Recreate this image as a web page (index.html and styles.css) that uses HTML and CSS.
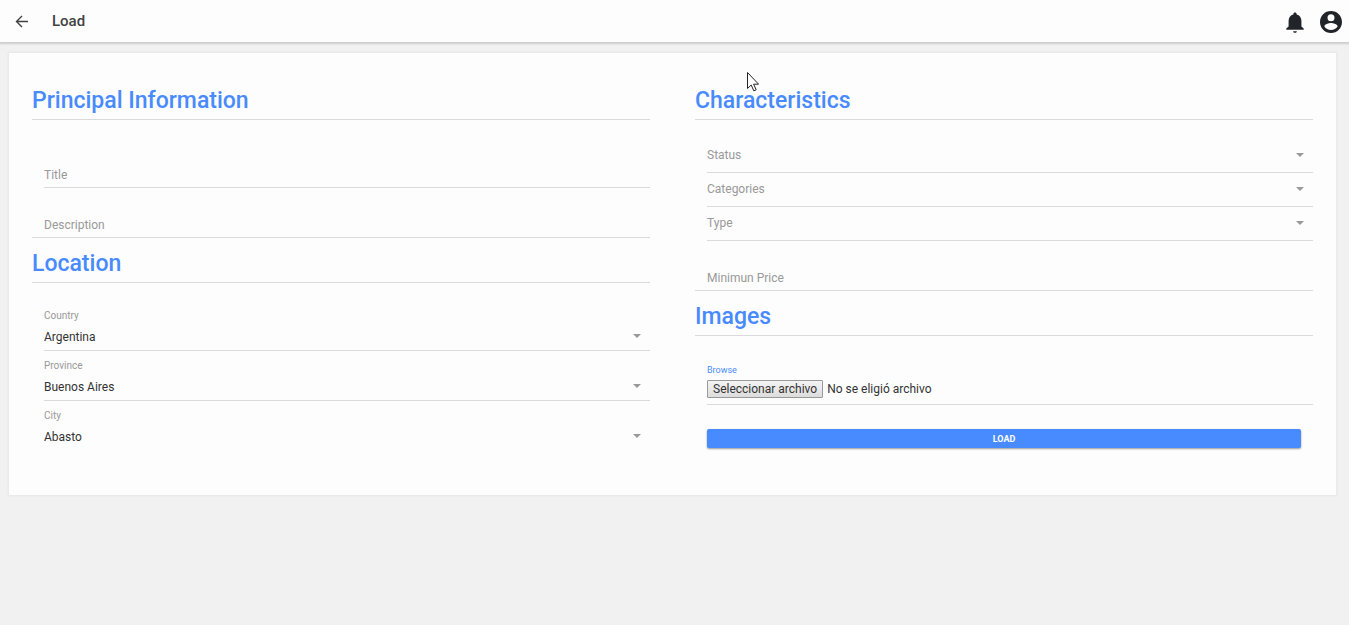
FILE: index.html
```
<!DOCTYPE html>
<html lang="en">
<head>
  <meta charset="utf-8">
  <meta name="viewport" content="width=device-width, initial-scale=1">
  <title>Load</title>
  <link rel="stylesheet" href="styles.css">
</head>
<body>
  <header class="toolbar">
    <button class="icon-button" type="button" aria-label="Back">
      <svg class="icon-back" viewBox="0 0 16 16"><path d="M14 8.500H2.500M8 3 2.500 8.500 8 14"/></svg>
    </button>
    <h1 class="toolbar-title">Load</h1>
    <div class="toolbar-actions">
      <button class="icon-button" type="button" aria-label="Notifications">
        <svg class="icon-action" viewBox="0 0 24 24"><path d="M12 23.800c1.100 0 2-.8 2-1.800h-4c0 1 .9 1.800 2 1.800zM19 17v-6c0-3.500-1.900-6.300-5.200-7.100V3.200C13.800 2.200 13 1.500 12 1.500s-1.800.7-1.800 1.700v.7C6.900 4.700 5 7.500 5 11v6l-2.500 2.200v1.300h19v-1.300z"/></svg>
      </button>
      <button class="icon-button" type="button" aria-label="Account">
        <svg class="icon-action" viewBox="1 1 22 22"><path d="M12 1C5.900 1 1 5.900 1 12s4.900 11 11 11 11-4.900 11-11S18.100 1 12 1zm0 3.300a3.500 3.500 0 1 1 0 7 3.500 3.500 0 0 1 0-7zM12 20c-2.800 0-5.200-1.400-6.600-3.500.1-2.200 4.400-3.400 6.600-3.400s6.500 1.200 6.600 3.400C17.200 18.600 14.800 20 12 20z"/></svg>
      </button>
    </div>
  </header>

  <main>
    <form class="card">
      <div class="column">
        <h2 class="section-title">Principal Information</h2>
        <div class="group">
          <div class="field text-field"><input type="text" placeholder="Title" aria-label="Title"></div>
          <div class="field text-field field-last"><input type="text" placeholder="Description" aria-label="Description"></div>
        </div>
        <h2 class="section-title">Location</h2>
        <div class="group">
          <div class="field stacked">
            <label for="country">Country</label>
            <div class="select-wrap"><select id="country"><option>Argentina</option></select></div>
          </div>
          <div class="field stacked">
            <label for="province">Province</label>
            <div class="select-wrap"><select id="province"><option>Buenos Aires</option></select></div>
          </div>
          <div class="field stacked no-line">
            <label for="city">City</label>
            <div class="select-wrap"><select id="city"><option>Abasto</option></select></div>
          </div>
        </div>
      </div>

      <div class="column">
        <h2 class="section-title">Characteristics</h2>
        <div class="group group-wide">
          <div class="field select-wrap compact"><select class="unset" aria-label="Status"><option>Status</option></select></div>
          <div class="field select-wrap compact"><select class="unset" aria-label="Categories"><option>Categories</option></select></div>
          <div class="field select-wrap compact"><select class="unset" aria-label="Type"><option>Type</option></select></div>
          <div class="field text-field field-last"><input type="text" placeholder="Minimun Price" aria-label="Minimun Price"></div>
        </div>
        <h2 class="section-title">Images</h2>
        <div class="group group-wide">
          <div class="field stacked">
            <label class="active" for="image">Browse</label>
            <div class="file-row">
              <input class="file-input" id="image" type="file">
              <span class="file-button">Seleccionar archivo</span>
              <span>No se eligió archivo</span>
            </div>
          </div>
          <button class="submit" type="button">LOAD</button>
        </div>
      </div>
    </form>
  </main>

  <svg class="pointer" viewBox="0 0 12 20" aria-hidden="true"><path d="M.5.5v16l3.700-3.500 2.600 5.800 2.400-1-2.600-5.600h5z"/></svg>
</body>
</html>
```
FILE: styles.css
```
* {
  box-sizing: border-box;
}

body {
  margin: 0;
  min-height: 100vh;
  background: #f1f1f1;
  color: #333;
  font: 12px/16px Roboto, "Liberation Sans", sans-serif;
}

button,
input,
select {
  margin: 0;
  padding: 0;
  border: 0;
  background: none;
  color: inherit;
  font: inherit;
}

.toolbar {
  display: flex;
  align-items: center;
  height: 42px;
  padding: 0 7px 0 14px;
  background: #fdfdfd;
  box-shadow: 0 1px 2px 1px #ccc;
}

.toolbar-title {
  margin: 0 0 0 22px;
  color: #424242;
  font-size: 15px;
  font-weight: 500;
}

.toolbar-actions {
  display: flex;
  gap: 14px;
  margin-left: auto;
  padding-top: 2px;
}

.icon-button {
  display: flex;
}

.icon-back {
  width: 16px;
  height: 16px;
  fill: none;
  stroke: #424242;
  stroke-width: 1.4;
}

.icon-action {
  width: 22px;
  height: 22px;
  fill: #212529;
}

.card {
  display: grid;
  grid-template-columns: 1fr 1fr;
  gap: 45px;
  margin: 11px 13px 0 9px;
  padding: 22px 23px 44px;
  background: #fdfdfd;
  box-shadow: 0 0 2px 1px #e6e6e6;
}

.section-title {
  margin: 0;
  padding: 12px 0 4px;
  border-bottom: 1px solid #dadada;
  color: #488aff;
  font-size: 23px;
  font-weight: 500;
  line-height: 28px;
}

.group {
  padding: 18px 0 0 12px;
}

.group-wide {
  padding-top: 19px;
}

.field {
  border-bottom: 1px solid #dadada;
}

.no-line {
  border-color: transparent;
}

.text-field {
  padding: 29px 0 4px;
}

.text-field input {
  display: block;
  width: 100%;
  height: 16px;
  outline: 0;
}

.text-field input::placeholder {
  color: #999;
  opacity: 1;
}

.field-last {
  margin-left: -12px;
  padding-left: 12px;
}

.stacked {
  padding-top: 8px;
}

.stacked label {
  display: block;
  margin-bottom: 1px;
  color: #999;
  font-size: 10px;
  line-height: 14px;
}

.stacked .active {
  color: #488aff;
  font-size: 9px;
}

.select-wrap {
  position: relative;
}

.select-wrap::after {
  content: "";
  position: absolute;
  top: 50%;
  right: 9px;
  margin-top: -3px;
  border: 4px solid transparent;
  border-top-color: #999;
  border-bottom: 0;
  pointer-events: none;
}

.select-wrap select {
  display: block;
  width: 100%;
  height: 26px;
  appearance: none;
}

.select-wrap.compact select {
  height: 33px;
  padding-bottom: 2px;
}

.select-wrap .unset {
  color: #999;
}

.file-row {
  position: relative;
  display: flex;
  align-items: center;
  gap: 4px;
  height: 26px;
  padding-bottom: 4px;
}

.file-input {
  position: absolute;
  inset: 0;
  width: 100%;
  opacity: 0;
}

.file-button {
  padding: 0 5px;
  border: 1px solid #999;
  border-radius: 1px;
  background: linear-gradient(#f4f4f4, #dcdcdc);
}

.submit {
  display: block;
  width: calc(100% - 12px);
  height: 19px;
  margin-top: 24px;
  border-radius: 2px;
  background: #488aff;
  box-shadow: 0 1px 2px #999;
  color: #fff;
  font-size: 9px;
  font-weight: 700;
}

.pointer {
  position: absolute;
  top: 72px;
  left: 747px;
  width: 12px;
  height: 20px;
  fill: #fdfdfd;
  stroke: #222;
}
```
